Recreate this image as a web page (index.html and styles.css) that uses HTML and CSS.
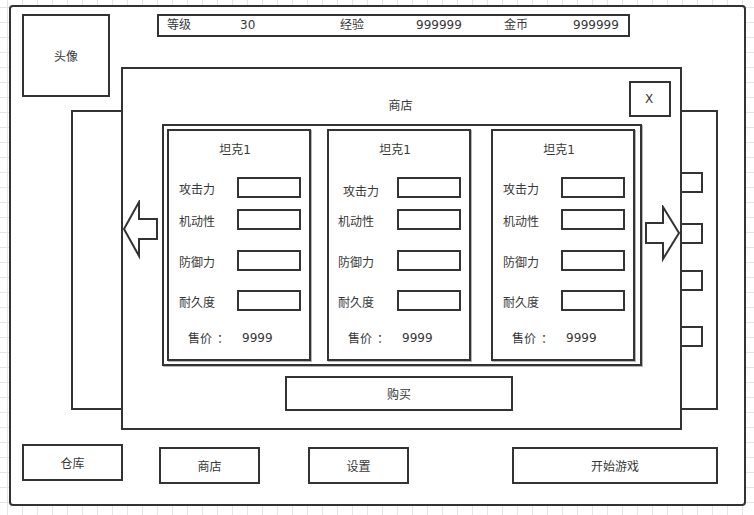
FILE: index.html
```html
<!DOCTYPE html>
<html lang="zh">
<head>
<meta charset="utf-8">
<title>商店界面</title>
<link rel="stylesheet" href="styles.css">
</head>
<body>
<div class="canvas">
  <div class="frame">
    <div class="node avatar">头像</div>

    <div class="node stats">
      <span>等级</span><span>30</span><span>经验</span><span>999999</span><span>金币</span><span>999999</span>
    </div>

    <div class="node back-panel"></div>

    <div class="node side-tab tab-1"></div>
    <div class="node side-tab tab-2"></div>
    <div class="node side-tab tab-3"></div>
    <div class="node side-tab tab-4"></div>

    <div class="node shop">
      <div class="shop-title">商店</div>
      <div class="close-btn">X</div>
      <div class="card-list">
        <div class="card">
          <div class="card-title">坦克1</div>
          <div class="stat r1"><span class="stat-label">攻击力</span><span class="stat-box"></span></div>
          <div class="stat r2"><span class="stat-label">机动性</span><span class="stat-box"></span></div>
          <div class="stat r3"><span class="stat-label">防御力</span><span class="stat-box"></span></div>
          <div class="stat r4"><span class="stat-label">耐久度</span><span class="stat-box"></span></div>
          <div class="price"><span class="price-label">售价<span class="colon">：</span></span><span>9999</span></div>
        </div>
        <div class="card card-mid">
          <div class="card-title">坦克1</div>
          <div class="stat r1"><span class="stat-label label-shift">攻击力</span><span class="stat-box"></span></div>
          <div class="stat r2"><span class="stat-label">机动性</span><span class="stat-box"></span></div>
          <div class="stat r3"><span class="stat-label">防御力</span><span class="stat-box"></span></div>
          <div class="stat r4"><span class="stat-label">耐久度</span><span class="stat-box"></span></div>
          <div class="price"><span class="price-label">售价<span class="colon">：</span></span><span>9999</span></div>
        </div>
        <div class="card card-last">
          <div class="card-title">坦克1</div>
          <div class="stat r1"><span class="stat-label">攻击力</span><span class="stat-box"></span></div>
          <div class="stat r2"><span class="stat-label">机动性</span><span class="stat-box"></span></div>
          <div class="stat r3"><span class="stat-label">防御力</span><span class="stat-box"></span></div>
          <div class="stat r4"><span class="stat-label">耐久度</span><span class="stat-box"></span></div>
          <div class="price"><span class="price-label">售价<span class="colon">：</span></span><span>9999</span></div>
        </div>
      </div>
      <div class="buy-btn">购买</div>
    </div>

    <svg class="node arrow arrow-left" width="38" height="60" viewBox="0 0 38 60">
      <polygon points="2,29 17,2 17,19 35,19 35,39 17,39 17,56" fill="#fff" stroke="#333" stroke-width="2" stroke-linejoin="miter"/>
    </svg>
    <svg class="node arrow arrow-right" width="38" height="58" viewBox="0 0 38 58">
      <polygon points="35,28 19,2 19,18 2,18 2,38 19,38 19,54" fill="#fff" stroke="#333" stroke-width="2" stroke-linejoin="miter"/>
    </svg>

    <div class="node btn btn-store">仓库</div>
    <div class="node btn btn-shop">商店</div>
    <div class="node btn btn-settings">设置</div>
    <div class="node btn btn-start">开始游戏</div>
  </div>
</div>
</body>
</html>
```
FILE: styles.css
```css
* { box-sizing: border-box; }

html, body {
  margin: 0;
  padding: 0;
  background: #fff;
}

body {
  font-family: "DejaVu Sans", "Noto Sans CJK SC", sans-serif;
  font-size: 12px;
  color: #383838;
}

.canvas {
  position: relative;
  width: 754px;
  height: 515px;
  overflow: hidden;
  background-color: #fff;
  background-image:
    linear-gradient(to right, #e4e4e4 1px, transparent 1px),
    linear-gradient(to bottom, #e4e4e4 1px, transparent 1px);
  background-size: 15px 15px;
  background-position: 7px 7px;
}

.frame {
  position: absolute;
  left: 9px;
  top: 5px;
  width: 737px;
  height: 501px;
  border: 2px solid #333;
  border-radius: 4px;
  background: #fff;
}

/* diagram nodes placed on the wireframe canvas */
.node {
  position: absolute;
}

.avatar {
  left: 11px;
  top: 7px;
  width: 88px;
  height: 83px;
  border: 2px solid #333;
  display: flex;
  align-items: center;
  justify-content: center;
}

.stats {
  left: 146px;
  top: 7px;
  width: 473px;
  height: 23px;
  border: 2px solid #333;
  display: grid;
  grid-template-columns: 73px 100px 76px 88px 69px auto;
  align-items: center;
  padding-left: 8px;
  line-height: 19px;
}

.back-panel {
  left: 60px;
  top: 103px;
  width: 647px;
  height: 300px;
  border: 2px solid #333;
  background: #fff;
}

.side-tab {
  left: 669px;
  width: 23px;
  height: 21px;
  border: 2px solid #333;
  background: #fff;
}
.tab-1 { top: 165px; }
.tab-2 { top: 216px; }
.tab-3 { top: 263px; }
.tab-4 { top: 319px; }

.shop {
  left: 110px;
  top: 60px;
  width: 561px;
  height: 363px;
  border: 2px solid #333;
  background: #fff;
}

.shop-title {
  margin-top: 27px;
  height: 20px;
  line-height: 20px;
  text-align: center;
  padding-right: 2px;
}

.close-btn {
  position: absolute;
  top: 12px;
  right: 9px;
  width: 42px;
  height: 36px;
  border: 2px solid #333;
  display: flex;
  align-items: center;
  justify-content: center;
  padding-right: 2px;
}

.card-list {
  margin: 8px 0 0 39px;
  width: 480px;
  height: 242px;
  border: 2px solid #333;
  box-shadow: 1px 1px 0 #b5b5b5;
  padding: 3px 5px 3px 3px;
  display: flex;
  gap: 16px;
}

.card {
  width: 144px;
  height: 232px;
  border: 2px solid #333;
  box-shadow: 1px 1px 0 #b5b5b5;
  display: flex;
  flex-direction: column;
}

.card-last { margin-left: 4px; }

.card-title {
  margin-top: 9px;
  height: 20px;
  line-height: 20px;
  text-align: center;
  padding-right: 8px;
}

.stat {
  display: flex;
  align-items: center;
  height: 21px;
  padding-left: 10px;
}
.card-mid .stat { padding-left: 9px; }
.card-mid .stat .stat-label { width: 59px; }

.r1 { margin-top: 17px; }
.r2 { margin-top: 11px; }
.r3 { margin-top: 20px; }
.r4 { margin-top: 19px; }

.stat-label {
  width: 58px;
  padding-top: 2px;
  white-space: nowrap;
}

.card-mid .stat .label-shift {
  padding-left: 5px;
  padding-top: 5px;
}

.stat-box {
  width: 64px;
  height: 21px;
  border: 2px solid #333;
}

.price {
  margin-top: 17px;
  height: 20px;
  line-height: 20px;
  display: flex;
  padding-left: 19px;
}

.price-label { width: 54px; }

.colon {
  font-family: "Noto Sans CJK SC", sans-serif;
  margin-left: 5px;
}

.buy-btn {
  margin: 10px 0 0 162px;
  width: 228px;
  height: 35px;
  border: 2px solid #333;
  display: flex;
  align-items: center;
  justify-content: center;
}

.arrow { display: block; }
.arrow-left { left: 111px; top: 193px; }
.arrow-right { left: 633px; top: 198px; }

.btn {
  height: 37px;
  border: 2px solid #333;
  display: flex;
  align-items: center;
  justify-content: center;
  background: #fff;
}
.btn-store { left: 11px; top: 437px; width: 101px; }
.btn-shop { left: 148px; top: 440px; width: 101px; }
.btn-settings { left: 297px; top: 440px; width: 101px; }
.btn-start { left: 501px; top: 440px; width: 206px; }
```
